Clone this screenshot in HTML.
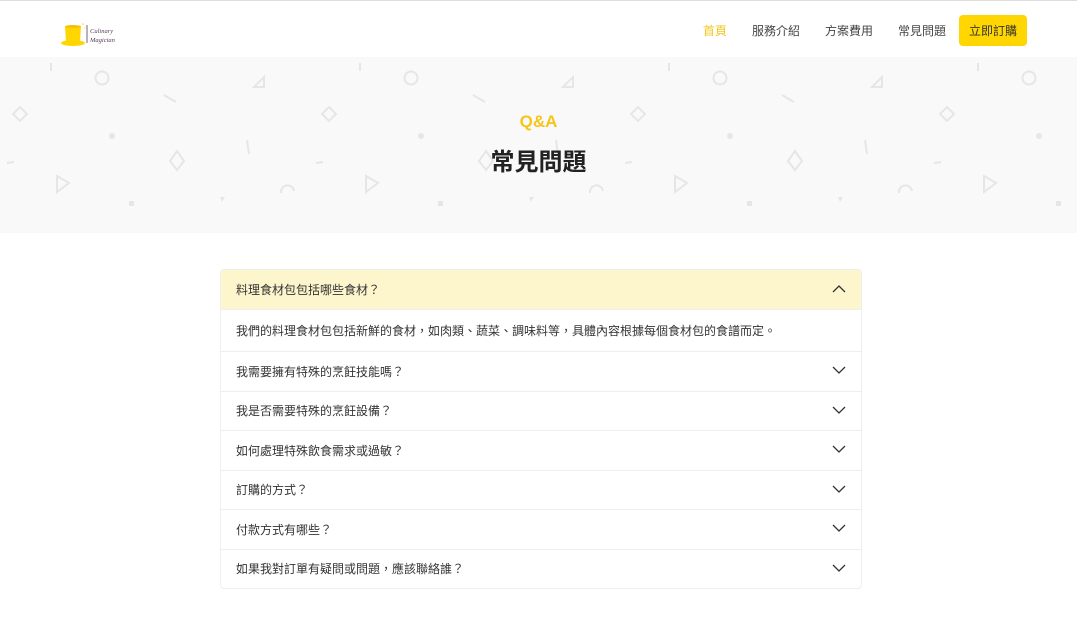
<!DOCTYPE html>
<html><head><meta charset="utf-8">
<style>
*{margin:0;padding:0;box-sizing:border-box}
body{width:1077px;height:626px;background:#fff;font-family:"Liberation Sans","Noto Sans CJK TC",sans-serif;color:#333;overflow:hidden;position:relative}
.top{height:1px;background:#ddd}
header{height:56px;position:relative}
.logo{position:absolute;left:60px;top:20px}
nav{position:absolute;right:50px;top:14px;display:flex;align-items:center;font-size:12px}
nav a{color:#444;text-decoration:none;margin-right:25px}
nav a.on{color:#f5c518}
nav .btn{background:#ffd600;color:#333;border-radius:4px;padding:7px 10px;margin-right:0;margin-left:-12px}
.hero{position:absolute;top:57px;left:0;width:1077px;height:176px;background:#f9f9f9}
.hero svg{position:absolute;left:0;top:0}
.qa{position:absolute;top:55px;width:100%;text-align:center;color:#f5c518;font-weight:bold;font-size:17px}
.h1{position:absolute;top:85px;width:100%;text-align:center;font-size:24px;font-weight:bold;color:#222}
.acc{position:absolute;left:220px;top:269px;width:642px;border:1px solid #eee;border-radius:4px;overflow:hidden;font-size:12px}
.it{height:39.5px;display:flex;align-items:center;padding-left:15px;border-top:1px solid #eee;position:relative;color:#333}
.it:first-child{border-top:0;background:#fdf5cc;height:39px}
.body{height:42px;display:flex;align-items:center;padding-left:15px;border-top:1px solid #eee;font-size:12px}
.it svg{position:absolute;right:15px;top:14px}
</style></head><body>
<div class="top"></div>
<header>
<svg class="logo" width="62" height="28" viewBox="0 0 62 28">
<ellipse cx="13" cy="22" rx="12" ry="3" fill="#ffd600"/>
<path d="M5 6 L21 5 L20 21 L6 21 Z" fill="#ffd600"/>
<ellipse cx="13" cy="5.5" rx="8" ry="1.5" fill="#f5c000"/>
<circle cx="23" cy="3" r="0.8" fill="#ffd600"/><circle cx="25" cy="7" r="0.6" fill="#ffd600"/>
<line x1="27" y1="4" x2="27" y2="22" stroke="#5a3a5a" stroke-width="0.8"/>
<text x="30" y="12" font-size="6.5" fill="#5a3a5a" font-family="Liberation Serif,serif" font-style="italic">Culinary</text>
<text x="30" y="21" font-size="6.5" fill="#5a3a5a" font-family="Liberation Serif,serif" font-style="italic">Magician</text>
</svg>
<nav><a class="on">首頁</a><a>服務介紹</a><a>方案費用</a><a>常見問題</a><a class="btn">立即訂購</a></nav>
</header>
<div class="hero">
<svg width="1077" height="176">
<defs><pattern id="p" x="0" y="0" width="309" height="176" patternUnits="userSpaceOnUse">
<g fill="none" stroke="#e6e6e6" stroke-width="2">
<line x1="51" y1="6" x2="51" y2="14"/>
<circle cx="102" cy="21" r="6.5"/>
<line x1="164" y1="38" x2="176" y2="45"/>
<path d="M254 30 L264 20 L264 30 Z"/>
<path d="M20 50 L27 57 L20 64 L13 57 Z"/>
<line x1="247" y1="83" x2="249" y2="97"/>
<line x1="7" y1="106" x2="14" y2="105"/>
<path d="M177 94 L184 104 L177 113 L170 104 Z"/>
<path d="M57 119 L69 126 L57 135 Z"/>
<path d="M281 136 A6 6 0 0 1 294 134"/>
</g>
<g fill="#e6e6e6"><circle cx="112" cy="79" r="3"/><rect x="129" y="144" width="5" height="5"/><path d="M220 140 L225 140 L222 145 Z"/></g>
</pattern></defs>
<rect width="1077" height="176" fill="url(#p)"/>
</svg>
<div class="qa">Q&amp;A</div>
<div class="h1">常見問題</div>
</div>
<div class="acc">
<div class="it">料理食材包包括哪些食材？<svg width="14" height="9"><path d="M1 8 L7 2 L13 8" fill="none" stroke="#333" stroke-width="1.3"/></svg></div>
<div class="body">我們的料理食材包包括新鮮的食材，如肉類、蔬菜、調味料等，具體內容根據每個食材包的食譜而定。</div>
<div class="it">我需要擁有特殊的烹飪技能嗎？<svg width="14" height="9"><path d="M1 1 L7 7 L13 1" fill="none" stroke="#333" stroke-width="1.3"/></svg></div>
<div class="it">我是否需要特殊的烹飪設備？<svg width="14" height="9"><path d="M1 1 L7 7 L13 1" fill="none" stroke="#333" stroke-width="1.3"/></svg></div>
<div class="it">如何處理特殊飲食需求或過敏？<svg width="14" height="9"><path d="M1 1 L7 7 L13 1" fill="none" stroke="#333" stroke-width="1.3"/></svg></div>
<div class="it">訂購的方式？<svg width="14" height="9"><path d="M1 1 L7 7 L13 1" fill="none" stroke="#333" stroke-width="1.3"/></svg></div>
<div class="it">付款方式有哪些？<svg width="14" height="9"><path d="M1 1 L7 7 L13 1" fill="none" stroke="#333" stroke-width="1.3"/></svg></div>
<div class="it">如果我對訂單有疑問或問題，應該聯絡誰？<svg width="14" height="9"><path d="M1 1 L7 7 L13 1" fill="none" stroke="#333" stroke-width="1.3"/></svg></div>
</div>
</body></html>
